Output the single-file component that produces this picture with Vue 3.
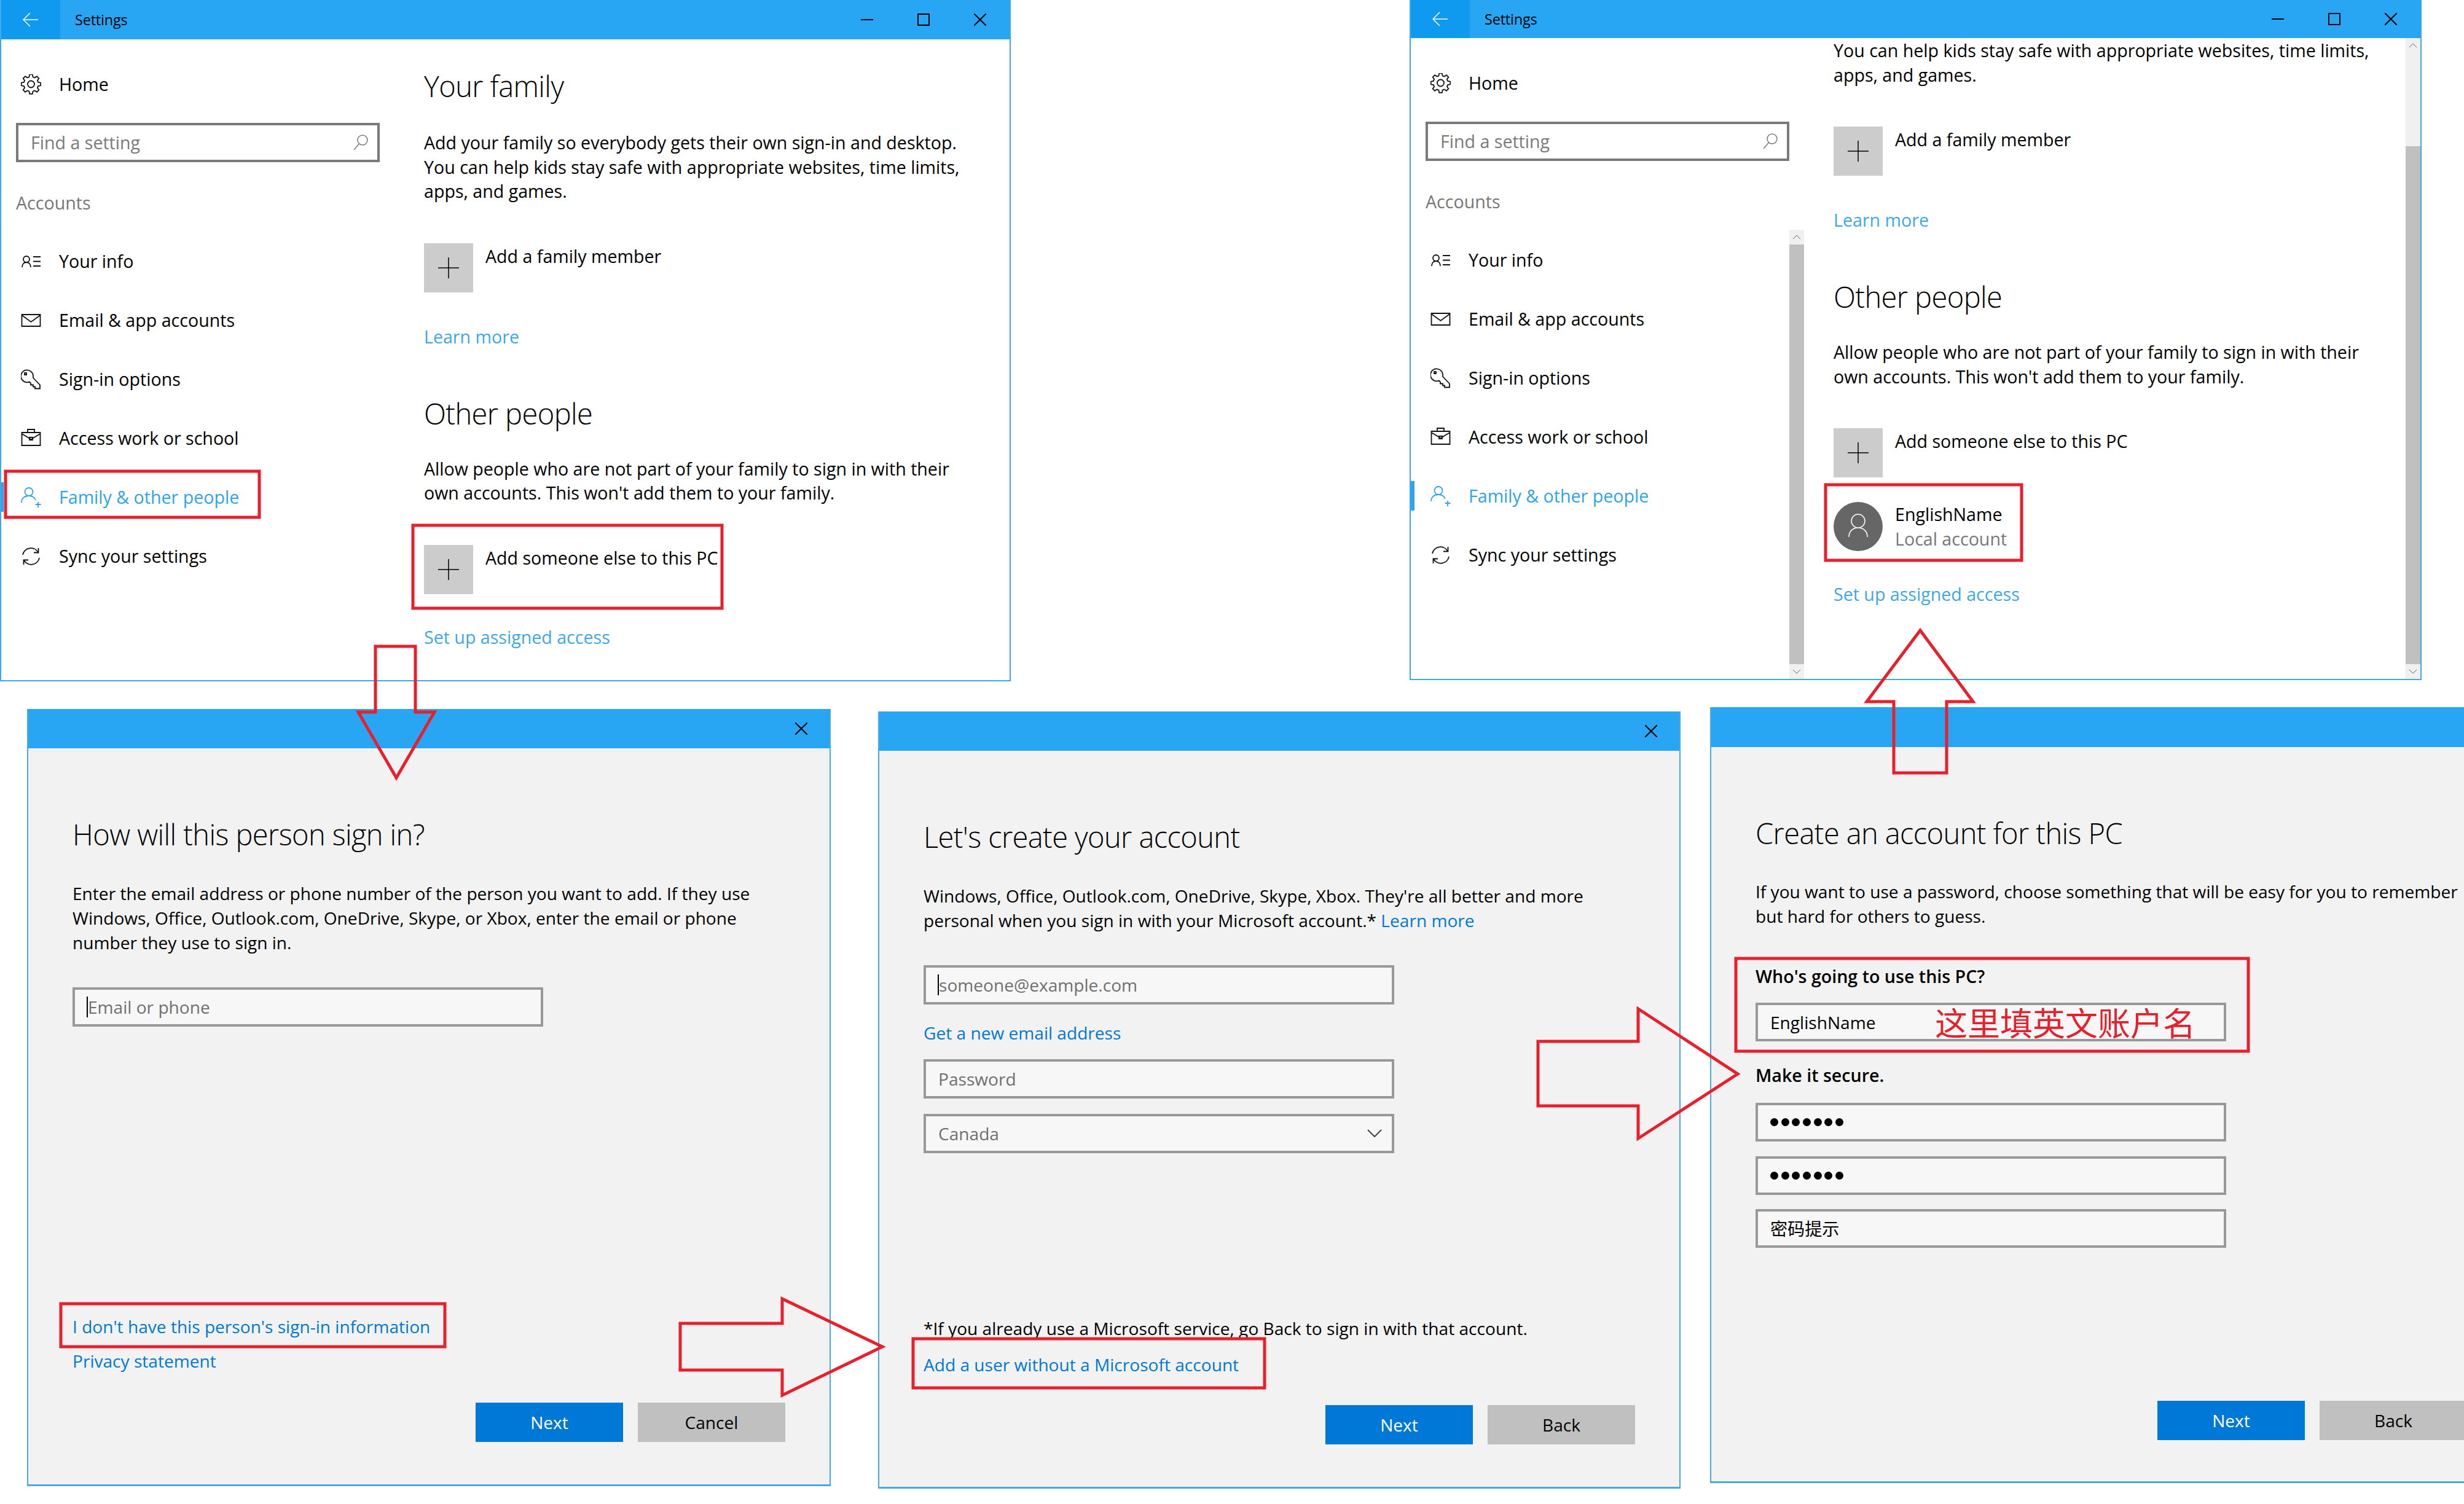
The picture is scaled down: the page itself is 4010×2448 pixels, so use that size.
<script setup>
// settings gear is generated, the other icons are plain stroke paths
function gearPath(cx, cy, outer, inner, teeth) {
  const pts = []
  for (let i = 0; i < teeth; i++) {
    const step = (Math.PI * 2) / teeth
    const a = i * step
    const list = [[-0.3, inner], [-0.17, outer], [0.17, outer], [0.3, inner]]
    for (const [off, r] of list) {
      const t = a + off * step * 1.1
      pts.push((cx + Math.cos(t) * r).toFixed(1) + ' ' + (cy + Math.sin(t) * r).toFixed(1))
    }
  }
  return 'M' + pts.join('L') + 'Z M' + (cx + 5.5) + ' ' + cy + 'a5.5 5.5 0 1 1-11 0a5.5 5.5 0 1 1 11 0'
}

const navItems = [
  { label: 'Your info', icon: 'M2 26c0-5 3-8 7-8s7 3 7 8M9 18a5 5 0 1 1 0-10a5 5 0 1 1 0 10M20 9h12M20 16.500h12M20 24h12' },
  { label: 'Email & app accounts', icon: 'M1.500 7h30v19h-30zM1.500 8l15 11l15-11' },
  { label: 'Sign-in options', icon: 'M20 11a10 10 0 1 0-6 9.500l2 2v3h4v3h3v3h8v-6L20 14zM6 6h3v3h-3z' },
  { label: 'Access work or school', icon: 'M1.500 7h30v21h-30zM11 7V2h11v5M1.500 9l15 9l15-9M14 15h5v4h-5z' },
  { label: 'Family & other people', icon: 'M1 25c0-7 5-11 12-11c5 0 9 2 11 7M13 14a6.500 6.500 0 1 1 0-13a6.500 6.500 0 1 1 0 13M23.500 28h9M28 24v9', active: true },
  { label: 'Sync your settings', icon: 'M3 14A13.500 13.500 0 0 1 28 10M28.500 3v7.500H21M30 19A13.500 13.500 0 0 1 5 23M4.500 30v-7.500H12' }
]

const settingsWindows = [
  { id: 'left', scrolled: false },
  { id: 'right', scrolled: true }
]

const arrows = [
  '611,1052 676,1052 676,1159 707,1159 645,1266 583,1159 611,1159',
  '3125,1026 3211,1142 3168,1142 3168,1258 3082,1258 3082,1142 3038,1142',
  '1107,2154 1273,2154 1273,2114 1436,2192 1273,2271 1273,2230 1107,2230',
  '2503,1695 2666,1695 2666,1642 2828,1748 2666,1853 2666,1800 2503,1800'
]

const boxes = [
  { x: 9, y: 767, w: 413, h: 75 },
  { x: 672, y: 855, w: 503, h: 135 },
  { x: 2971, y: 789, w: 319, h: 123 },
  { x: 99, y: 2122, w: 625, h: 70 },
  { x: 1486, y: 2179, w: 572, h: 80 },
  { x: 2825, y: 1560, w: 834, h: 151 }
]
const gear = gearPath(16.5, 16, 16, 12, 8)
</script>

<template>
  <div class="desktop">
    <section v-for="win in settingsWindows" :key="win.id" class="settings" :class="'settings-' + win.id">
      <header class="titlebar">
        <div class="back">
          <svg width="26" height="24" viewBox="0 0 26 24"><path d="M12 1L1 12l11 11M1 12h24" /></svg>
        </div>
        <span class="app-title">Settings</span>
        <div class="controls">
          <svg width="20" height="20" viewBox="0 0 20 20"><path d="M0 10h20" /></svg>
          <svg width="20" height="20" viewBox="0 0 20 20"><path d="M1 1h18v18H1z" /></svg>
          <svg width="20" height="20" viewBox="0 0 20 20"><path d="M0 0l20 20M20 0L0 20" /></svg>
        </div>
      </header>

      <div class="columns">
        <aside class="sidebar">
          <div class="home">
            <svg class="icon" viewBox="0 0 33 33"><path :d="gear" /></svg>
            <span>Home</span>
          </div>
          <div class="search">
            <span>Find a setting</span>
            <svg width="26" height="26" viewBox="0 0 26 26"><path d="M24 9a8 8 0 1 1-16 0a8 8 0 1 1 16 0M10.500 15L2 25" /></svg>
          </div>
          <div class="group-label">Accounts</div>
          <nav>
            <div v-for="item in navItems" :key="item.label" class="nav-row" :class="{ active: item.active }">
              <svg class="icon" viewBox="0 0 33 33"><path :d="item.icon" /></svg>
              <span>{{ item.label }}</span>
            </div>
          </nav>
        </aside>

        <main class="main">
          <template v-if="!win.scrolled">
            <h2 class="family-title">Your family</h2>
            <p class="copy first-copy">Add your family so everybody gets their own sign-in and desktop.<br>You can help kids stay safe with appropriate websites, time limits,<br>apps, and games.</p>
          </template>
          <p v-else class="copy">You can help kids stay safe with appropriate websites, time limits,<br>apps, and games.</p>
          <div class="tile-row">
            <div class="tile"><svg width="34" height="34" viewBox="0 0 34 34"><path d="M17 0v34M0 17h34" /></svg></div>
            <span>Add a family member</span>
          </div>
          <a class="link">Learn more</a>
          <h2 class="other-title">Other people</h2>
          <p class="copy other-copy">Allow people who are not part of your family to sign in with their<br>own accounts. This won't add them to your family.</p>
          <div class="tile-row">
            <div class="tile"><svg width="34" height="34" viewBox="0 0 34 34"><path d="M17 0v34M0 17h34" /></svg></div>
            <span>Add someone else to this PC</span>
          </div>
          <div v-if="win.scrolled" class="account-row">
            <div class="avatar">
              <svg width="40" height="44" viewBox="0 0 40 44"><path d="M31 13a11 11 0 1 1-22 0a11 11 0 1 1 22 0M5 39c0-9 6-15 15-15s15 6 15 15" /></svg>
            </div>
            <div>
              <div>EnglishName</div>
              <div class="muted">Local account</div>
            </div>
          </div>
          <a class="link last-link">Set up assigned access</a>
        </main>
      </div>

      <template v-if="win.scrolled">
        <div class="scrollbar side-scroll">
          <div class="scroll-btn">
            <svg width="14" height="8" viewBox="0 0 14 8"><path d="M1 7l6-6l6 6" /></svg>
          </div>
          <div class="scroll-thumb"></div>
          <div class="scroll-btn">
            <svg width="14" height="8" viewBox="0 0 14 8"><path d="M1 1l6 6l6-6" /></svg>
          </div>
        </div>
        <div class="scrollbar main-scroll">
          <div class="scroll-btn long">
            <svg width="14" height="8" viewBox="0 0 14 8"><path d="M1 7l6-6l6 6" /></svg>
          </div>
          <div class="scroll-thumb"></div>
          <div class="scroll-btn">
            <svg width="14" height="8" viewBox="0 0 14 8"><path d="M1 1l6 6l6-6" /></svg>
          </div>
        </div>
      </template>
    </section>

    <section class="dialog dialog-a">
      <header class="dialog-bar">
        <svg width="20" height="20" viewBox="0 0 20 20"><path d="M0 0l20 20M20 0L0 20" /></svg>
      </header>
      <div class="dialog-body">
        <h2>How will this person sign in?</h2>
        <p class="copy">Enter the email address or phone number of the person you want to add. If they use<br>Windows, Office, Outlook.com, OneDrive, Skype, or Xbox, enter the email or phone<br>number they use to sign in.</p>
        <div class="field field-a"><span class="hint with-caret">Email or phone</span></div>
        <div class="bottom-links">
          <a class="blue-link">I don't have this person's sign-in information</a>
          <a class="blue-link privacy">Privacy statement</a>
        </div>
        <div class="actions">
          <button class="primary">Next</button>
          <button>Cancel</button>
        </div>
      </div>
    </section>

    <section class="dialog dialog-b">
      <header class="dialog-bar">
        <svg width="20" height="20" viewBox="0 0 20 20"><path d="M0 0l20 20M20 0L0 20" /></svg>
      </header>
      <div class="dialog-body">
        <h2>Let's create your account</h2>
        <p class="copy">Windows, Office, Outlook.com, OneDrive, Skype, Xbox. They're all better and more<br>personal when you sign in with your Microsoft account.* <a class="blue-link">Learn more</a></p>
        <div class="field field-b"><span class="hint with-caret">someone@example.com</span></div>
        <a class="blue-link new-mail">Get a new email address</a>
        <div class="field password"><span class="hint">Password</span></div>
        <div class="field country">
          <span class="hint">Canada</span>
          <svg width="24" height="14" viewBox="0 0 24 14"><path d="M1 1l11 11L23 1" /></svg>
        </div>
        <div class="bottom-links">
          <div class="footnote">*If you already use a Microsoft service, go Back to sign in with that account.</div>
          <a class="blue-link add-user">Add a user without a Microsoft account</a>
        </div>
        <div class="actions actions-b">
          <button class="primary">Next</button>
          <button>Back</button>
        </div>
      </div>
    </section>

    <section class="dialog dialog-c">
      <header class="dialog-bar"></header>
      <div class="dialog-body">
        <h2>Create an account for this PC</h2>
        <p class="copy">If you want to use a password, choose something that will be easy for you to remember<br>but hard for others to guess.</p>
        <div class="label who">Who's going to use this PC?</div>
        <div class="field slim name-field">
          <span>EnglishName</span>
          <span class="note">这里填英文账户名</span>
        </div>
        <div class="label secure">Make it secure.</div>
        <div class="field slim pw-one"><i v-for="n in 7" :key="n" class="dot"></i></div>
        <div class="field slim pw-two"><i v-for="n in 7" :key="'b' + n" class="dot"></i></div>
        <div class="field slim pw-hint"><span>密码提示</span></div>
        <div class="actions actions-c">
          <button class="primary">Next</button>
          <button>Back</button>
        </div>
      </div>
    </section>

    <svg class="marks" width="4010" height="2448" viewBox="0 0 4010 2448">
      <rect v-for="b in boxes" :key="b.x" :x="b.x" :y="b.y" :width="b.w" :height="b.h" />
      <polygon v-for="p in arrows" :key="p" :points="p" />
    </svg>
  </div>
</template>

<style scoped>
.desktop {
  position: relative;
  width: 4010px;
  height: 2448px;
  overflow: hidden;
  background: #fff;
  color: #000;
  font-family: "Open Sans", "Noto Sans CJK SC", sans-serif;
  font-size: 28.600px;
  line-height: 40px;
}
h2, p { margin: 0; font-weight: 300; }

.settings {
  position: absolute;
  top: 0;
  box-sizing: border-box;
  border: 2px solid #3fa9ee;
  border-top: 0;
  display: flex;
  flex-direction: column;
  overflow: hidden;
}
.settings-left { left: 0; width: 1645px; height: 1109px; }
.settings-right { left: 2294px; width: 1647px; height: 1107px; }
.titlebar {
  height: 64px;
  flex: none;
  display: flex;
  align-items: center;
  background: #28a6f4;
}
.settings-right .titlebar { height: 62px; }
.back {
  width: 96px;
  height: 100%;
  flex: none;
  display: flex;
  align-items: center;
  justify-content: center;
  background: #0f9af0;
}
.back svg { fill: none; stroke: #fff; stroke-width: 1.500; }
.app-title { margin-left: 24px; font-size: 23.500px; letter-spacing: -0.2px; }
.controls {
  margin-left: auto;
  margin-right: 38px;
  display: flex;
  gap: 72px;
}
.controls svg { fill: none; stroke: #000; stroke-width: 2; }

.columns { flex: 1; display: flex; min-height: 0; }
.sidebar { width: 664px; flex: none; padding-top: 49px; box-sizing: border-box; }
.home, .nav-row {
  position: relative;
  display: flex;
  align-items: center;
  gap: 29px;
  padding-left: 32px;
}
.home { height: 48px; }
.nav-row { height: 96px; }
.icon { width: 33px; height: 33px; flex: none; fill: none; stroke: #111; stroke-width: 1.800; }
.nav-row.active { color: #2fa3ec; }
.nav-row.active .icon { stroke: #2fa3ec; }
.settings-right .nav-row.active::before {
  content: "";
  position: absolute;
  left: 0;
  top: 24px;
  width: 6px;
  height: 48px;
  background: #2fa3ec;
}
.settings-left .nav-row.active::before {
  content: "";
  position: absolute;
  left: 0;
  top: 24px;
  width: 4px;
  height: 48px;
  background: #2fa3ec;
}
.search {
  margin: 39px 0 0 24px;
  width: 592px;
  height: 64px;
  box-sizing: border-box;
  border: 4px solid #7a7a7a;
  display: flex;
  align-items: center;
  justify-content: space-between;
  padding: 0 14px 0 20px;
  color: #7a7a7a;
}
.search svg { fill: none; stroke: #7a7a7a; stroke-width: 1.500; }
.group-label { margin: 46px 0 27px 24px; color: #767676; }

.main { flex: 1; padding-left: 24px; overflow: hidden; }
.family-title, .other-title, .dialog h2 {
  font-size: 47px;
  line-height: 60px;
  letter-spacing: -0.6px;
}
.family-title { margin-top: 46px; }
.other-title { margin-top: 75px; }
.copy { font-weight: 400; white-space: nowrap; }
.settings .copy { line-height: 39.500px; }
.first-copy { margin-top: 42px; }
.other-copy { margin: 40px 0 3px; }
.tile-row { display: flex; gap: 20px; margin-top: 65px; line-height: 41px; }
.tile {
  width: 80px;
  height: 80px;
  flex: none;
  background: #ccc;
  display: flex;
  align-items: center;
  justify-content: center;
}
.tile svg { fill: none; stroke: #000; stroke-width: 1.500; }
.link { display: block; margin-top: 52px; color: #3ea7e8; }
.last-link { margin-top: 50px; }
.account-row { display: flex; gap: 20px; margin-top: 40px; height: 80px; align-items: center; }
.avatar {
  width: 80px;
  height: 80px;
  border-radius: 50%;
  background: #666;
  display: flex;
  align-items: center;
  justify-content: center;
}
.avatar svg { fill: none; stroke: #fff; stroke-width: 1.500; }
.muted { color: #777; }

.scrollbar { position: absolute; display: flex; flex-direction: column; width: 24px; }
.side-scroll { left: 616px; top: 374px; bottom: 0; }
.main-scroll { right: 0; top: 62px; bottom: 0; }
.scroll-btn {
  height: 24px;
  flex: none;
  background: #f0f0f0;
  display: flex;
  align-items: center;
  justify-content: center;
}
.scroll-btn.long { height: 176px; align-items: flex-start; padding-top: 8px; box-sizing: border-box; }
.scroll-btn svg { fill: none; stroke: #666; stroke-width: 1; }
.scroll-thumb { flex: 1; background: #c0c0c0; }

.dialog {
  position: absolute;
  box-sizing: border-box;
  border: 2px solid #4aa8e4;
  border-top: 0;
  border-bottom-width: 3px;
  display: flex;
  flex-direction: column;
  background: #f2f2f2;
  font-size: 28.100px;
}
.dialog-a { left: 44px; top: 1154px; width: 1308px; height: 1265px; }
.dialog-b { left: 1429px; top: 1158px; width: 1306px; height: 1265px; }
.dialog-c { left: 2783px; top: 1151px; width: 1306px; height: 1263px; }
.dialog-bar {
  height: 64px;
  flex: none;
  background: #28a6f4;
  display: flex;
  align-items: center;
  justify-content: flex-end;
  padding-right: 36px;
}
.dialog-c .dialog-bar { height: 65px; }
.dialog-bar svg { fill: none; stroke: #000; stroke-width: 2; }
.dialog-body {
  flex: 1;
  min-height: 0;
  display: flex;
  flex-direction: column;
  padding: 110px 72px 69px 72px;
}
.dialog-c .dialog-body { padding-bottom: 67px; }
.dialog .copy { margin-top: 46px; }
.dialog-c .copy { margin-top: 45px; }
.field {
  height: 64px;
  flex: none;
  box-sizing: border-box;
  width: 766px;
  border: 4px solid #999;
  background: #f7f7f7;
  display: flex;
  align-items: center;
  padding-left: 20px;
  position: relative;
}
.field.slim { height: 63px; }
.hint { color: #6f6f6f; }
.with-caret { border-left: 2px solid #000; margin-left: -1px; padding-left: 0; line-height: 34px; }
.field-a { margin-top: 53px; }
.field-b { margin-top: 53px; }
.blue-link { color: #0078d7; }
.privacy { margin-top: 16px; }
.new-mail { margin-top: 26px; }
.password { margin-top: 23px; }
.country { margin-top: 25px; justify-content: space-between; padding-right: 16px; }
.country svg { fill: none; stroke: #444; stroke-width: 2; }
.bottom-links { margin-top: auto; display: flex; flex-direction: column; }
.add-user { margin-top: 19px; }
.actions { display: flex; justify-content: flex-end; gap: 24px; margin-top: 48px; }
.actions-b { margin-top: 46px; }
.actions-c { margin-top: auto; }
button {
  width: 240px;
  height: 64px;
  border: 0;
  padding: 0;
  background: #c0c0c0;
  color: #000;
  font: inherit;
}
button.primary { background: #0078d7; color: #fff; }

.label { font-size: 28.600px; font-weight: 600; }
.who { margin-top: 58px; }
.secure { margin-top: 35px; }
.name-field { margin-top: 23px; }
.pw-one { margin-top: 25px; gap: 4.700px; }
.pw-two { margin-top: 24px; gap: 4.700px; }
.pw-hint { margin-top: 23px; }
.dot { width: 13px; height: 13px; border-radius: 50%; background: #000; }
.note {
  position: absolute;
  left: 288px;
  top: -4px;
  line-height: 63px;
  font-size: 53px;
  color: #e8202c;
  font-family: "Noto Sans CJK SC", sans-serif;
  font-weight: 400;
  white-space: nowrap;
}

.marks { position: absolute; left: 0; top: 0; pointer-events: none; }
.marks rect, .marks polygon { fill: none; stroke: #e8202c; stroke-width: 5; }
</style>

<style>
html, body { margin: 0; background: #fff; }
</style>
